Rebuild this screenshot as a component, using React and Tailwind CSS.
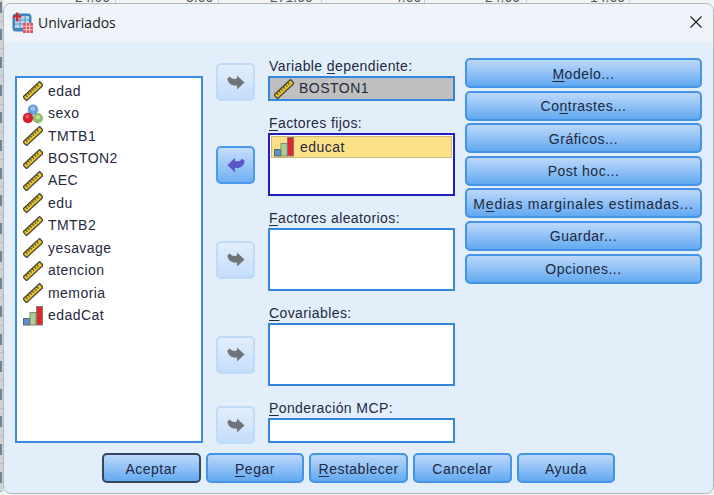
import React from "react";

const font = { fontFamily: '"Liberation Sans", Arial, sans-serif' };

function Ruler({ className = "" }) {
  return (
    <svg width="20" height="20" viewBox="0 0 20 20" className={className}>
      <g transform="rotate(-43 10 10)">
        <rect x="-2" y="6.9" width="24" height="6.4" rx="0.6" fill="#46463a" />
        <rect x="-0.6" y="8.2" width="21.2" height="3.8" fill="#e9c52e" />
        <path d="M2 8.2v2.2M5 8.2v2.2M8 8.2v2.2M11 8.2v2.2M14 8.2v2.2M17 8.2v2.2" stroke="#5a5020" strokeWidth="1.2" />
      </g>
    </svg>
  );
}

function Nominal() {
  return (
    <svg width="21" height="20" viewBox="0 0 21 20">
      <circle cx="10.5" cy="5.6" r="5.2" fill="#6a9fe0" stroke="#5a8ccc" strokeWidth="0.6" />
      <circle cx="10.5" cy="4.6" r="2.6" fill="#9cc2f0" />
      <circle cx="15.6" cy="14.4" r="5" fill="#8cc068" stroke="#74a556" strokeWidth="0.6" />
      <circle cx="15.6" cy="13.4" r="2.4" fill="#b9dc9f" />
      <circle cx="5.2" cy="14.2" r="5.2" fill="#d4202e" stroke="#a81a26" strokeWidth="0.6" />
      <circle cx="4.6" cy="12.6" r="2" fill="#e8585f" />
    </svg>
  );
}

function Ordinal() {
  return (
    <svg width="20" height="20" viewBox="0 0 20 20">
      <rect x="0.5" y="12.5" width="6" height="6.5" fill="#5b8fd0" stroke="#5f6770" />
      <rect x="7" y="6.5" width="6" height="12.5" fill="#a9d08e" stroke="#7f8a80" />
      <rect x="13.5" y="0.5" width="6" height="18.5" fill="#e3262b" stroke="#857a7a" />
    </svg>
  );
}

function ArrowGlyph({ active }) {
  return active ? (
    <svg width="18" height="16" viewBox="0 0 18 16">
      <path d="M0.5 8 L8 0.8 L8 4 C11 4.8 13.6 4.2 15 1.8 L17.6 3.8 C17 9 13.4 11.4 9 11 L8 11 L8 15.5 Z" fill="#5a57c9" />
    </svg>
  ) : (
    <svg width="18" height="15" viewBox="0 0 18 15">
      <path d="M17.5 7.4 L10 0.5 L10 3.6 C7 4.4 4.2 3.8 2.8 1.6 L0.4 3.6 C1 8.6 4.6 11 9 10.6 L10 10.6 L10 14.5 Z" fill="#707478" />
    </svg>
  );
}

function ArrowButton({ active }) {
  return (
    <div
      className={
        "w-[39px] h-[38px] shrink-0 flex items-center justify-center rounded-[5px] border-2 " +
        (active
          ? "border-[#4b9bec] bg-gradient-to-b from-[#c6ddfa] to-[#6eb0f2]"
          : "border-[#c0dbf8] bg-gradient-to-b from-[#e2eefc] to-[#c3defb]")
      }
    >
      <ArrowGlyph active={active} />
    </div>
  );
}

function U({ children }) {
  return <span className="underline underline-offset-2">{children}</span>;
}

function Blue({ children, className = "tracking-[0.5px]" }) {
  return (
    <div
      className={
        "h-[30px] pt-[2px] flex items-center justify-center rounded-[5px] border-2 border-[#4494ea] bg-gradient-to-b from-[#bcd8fa] to-[#62a9f0] text-[14px] text-[#20283f] whitespace-nowrap " +
        className
      }
    >
      <span>{children}</span>
    </div>
  );
}

function Field({ label, h = "h-[63px]", children, className = "border-2 border-[#3486dc] bg-white" }) {
  return (
    <div className="w-[187px]">
      <div className="h-[18px] pl-px text-[14px] leading-[17px] tracking-[0.4px] text-[#242a3e] whitespace-nowrap">{label}</div>
      <div className={h + " " + className}>{children}</div>
    </div>
  );
}

const vars = [
  ["edad", "s"], ["sexo", "n"], ["TMTB1", "s"], ["BOSTON2", "s"], ["AEC", "s"], ["edu", "s"],
  ["TMTB2", "s"], ["yesavage", "s"], ["atencion", "s"], ["memoria", "s"], ["edadCat", "o"],
];

const gridX = [115, 218, 321, 424, 526, 629];
const rows = Array.from({ length: 18 }, (_, i) => i);

export default function App() {
  return (
    <div className="relative w-[714px] h-[495px] overflow-hidden bg-[#f2f3f4]" style={font}>
      {/* spreadsheet behind the dialog */}
      <div className="absolute left-0 top-0 w-[714px] h-[3px] overflow-hidden text-[14px] text-[#555] leading-none">
        <span className="absolute left-[75px] top-[-10px]">24.00</span>
        <span className="absolute left-[186px] top-[-10px]">3.00</span>
        <span className="absolute left-[270px] top-[-10px]">271.00</span>
        <span className="absolute left-[394px] top-[-10px]">4.00</span>
        <span className="absolute left-[485px] top-[-10px]">24.00</span>
        <span className="absolute left-[590px] top-[-10px]">14.00</span>
        {gridX.map((x) => (
          <span key={x} className="absolute top-0 w-px h-[3px] bg-[#b9d0e8]" style={{ left: x }} />
        ))}
      </div>
      <div className="absolute left-0 top-[-6px] w-[3px] bg-[#d0d1d2] flex flex-col">
        {rows.map((i) => (
          <div key={i} className="h-[27.65px] shrink-0 border-b border-[#a9c0d8] flex items-center">
            <span className="w-[2px] h-[11px] bg-[#6f8496]" />
          </div>
        ))}
      </div>

      <div className="absolute left-[3px] top-[3px] w-[711px] h-[491px] rounded-[8px] border border-[#b4b8bd] overflow-hidden flex flex-col bg-[#e3eefb]">
        {/* title bar */}
        <div className="h-[38px] shrink-0 bg-[#eff3fa] flex items-center pl-[8px] pr-[11px]">
          <svg width="21" height="21" viewBox="0 0 21 21" className="mt-[-2px]">
            <rect x="0.5" y="1.5" width="19" height="18" rx="3.5" fill="#3f86b8" />
            <rect x="3" y="4" width="14" height="12" fill="#b9d6ea" />
            <path d="M3 8h14M3 12h14M8 4v12M13 4v12" stroke="#5a96c4" strokeWidth="1" />
            <path d="M5.2 0.5v9M1 4.5h8.5" stroke="#d8222c" strokeWidth="2.2" />
            <rect x="11" y="11" width="10" height="10" fill="#e0505c" />
            <path d="M11 14.3h10M11 17.6h10M14.3 11v10M17.6 11v10" stroke="#f6c8cc" strokeWidth="1" />
          </svg>
          <span className="ml-[5px] text-[14px] text-[#1b1b1b] mt-[-2px]" style={{ fontFamily: '"Open Sans", "Liberation Sans", sans-serif' }}>
            Univariados
          </span>
          <svg width="12" height="12" viewBox="0 0 12 12" className="ml-auto mt-[-2px]">
            <path d="M0.5 0.5L11.5 11.5M11.5 0.5L0.5 11.5" stroke="#1a1a1a" strokeWidth="1.1" />
          </svg>
        </div>

        {/* body */}
        <div className="flex pl-[11px] pt-[16px]">
          {/* source list */}
          <div className="w-[188px] h-[367px] mt-[18px] border-2 border-[#3a8ae0] bg-white pt-[2px] shrink-0">
            {vars.map(([name, t]) => (
              <div key={name} className="h-[22.45px] flex items-center pl-[6px] gap-[5px]">
                <span className="w-[20px] h-[20px] flex items-center justify-center">
                  {t === "s" ? <Ruler /> : t === "n" ? <Nominal /> : <Ordinal />}
                </span>
                <span className="text-[14px] tracking-[0.45px] text-[#252a40]">{name}</span>
              </div>
            ))}
          </div>

          {/* arrows + target fields */}
          <div className="ml-[13px] w-[239px] flex flex-col gap-[14px] shrink-0">
            <div className="flex items-end gap-[13px]">
              <ArrowButton />
              <Field label={<>Variable <U>d</U>ependiente:</>} h="h-[25px]" className="border-2 border-[#3486dc] bg-[#bfbfbf]">
                <div className="h-full flex items-center pl-[4px] gap-[5px]">
                  <Ruler />
                  <span className="text-[14px] tracking-[0.5px] text-[#252a40]">BOSTON1</span>
                </div>
              </Field>
            </div>
            <div className="flex gap-[13px]">
              <div className="pt-[18px] h-[81px] flex items-center shrink-0"><ArrowButton active /></div>
              <Field label={<><U>F</U>actores fijos:</>} className="border-2 border-[#1f1fc0] bg-white">
                <div className="m-[1px] h-[22px] border border-[#cdb978] bg-[#fde187] flex items-center pl-[2px] gap-[6px]">
                  <Ordinal />
                  <span className="text-[14px] tracking-[0.45px] text-[#252a40]">educat</span>
                </div>
              </Field>
            </div>
            <div className="flex gap-[13px]">
              <div className="pt-[18px] h-[81px] flex items-center shrink-0"><ArrowButton /></div>
              <Field label={<><U>F</U>actores aleatorios:</>} />
            </div>
            <div className="flex gap-[13px]">
              <div className="pt-[18px] h-[81px] flex items-center shrink-0"><ArrowButton /></div>
              <Field label={<><U>C</U>ovariables:</>} />
            </div>
            <div className="flex items-end gap-[13px]">
              <div className="mb-[-1px]"><ArrowButton /></div>
              <Field label={<><U>P</U>onderación MCP:</>} h="h-[25px]" />
            </div>
          </div>

          {/* side buttons */}
          <div className="ml-[10px] w-[237px] flex flex-col gap-[2.6px] shrink-0">
            <Blue><U>M</U>odelo...</Blue>
            <Blue>Co<U>n</U>trastes...</Blue>
            <Blue>Gráficos...</Blue>
            <Blue>Post hoc...</Blue>
            <Blue className="tracking-[0.78px]">M<U>e</U>dias marginales estimadas...</Blue>
            <Blue>Guardar...</Blue>
            <Blue>Opciones...</Blue>
          </div>
        </div>

        {/* bottom buttons */}
        <div className="flex gap-[5.2px] pl-[98px] mt-[10px]">
          <Blue className="w-[98.5px] tracking-[0.5px] !border-[#33465c]">Aceptar</Blue>
          <Blue className="w-[98.5px] tracking-[0.5px]"><U>P</U>egar</Blue>
          <Blue className="w-[98.5px] tracking-[0.5px]"><U>R</U>establecer</Blue>
          <Blue className="w-[98.5px] tracking-[0.5px]">Cancelar</Blue>
          <Blue className="w-[98.5px] tracking-[0.5px]">Ayuda</Blue>
        </div>
      </div>
    </div>
  );
}
